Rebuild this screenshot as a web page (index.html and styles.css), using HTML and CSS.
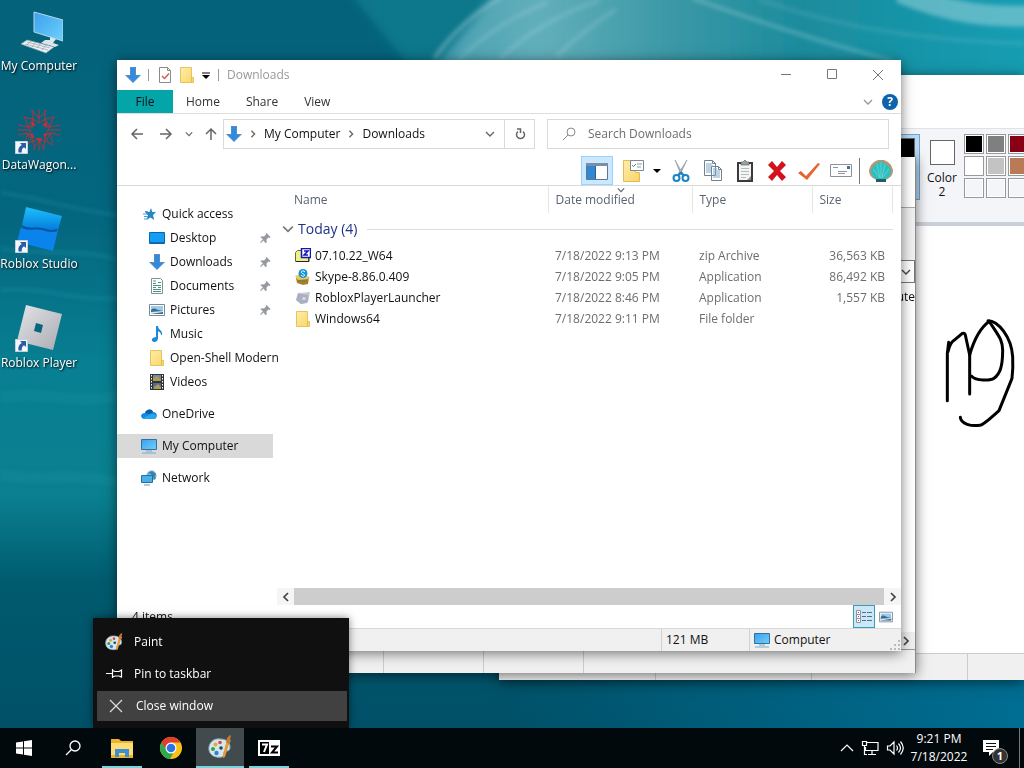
FILE: index.html
```html
<!DOCTYPE html>
<html lang="en">
<head>
    <meta charset="UTF-8">
    <meta name="viewport" content="width=device-width, initial-scale=1.0">
    <title>Downloads</title>
    <link rel="stylesheet" href="styles.css">
</head>
<body>

<!-- Shared icons -->
<svg class="sprites" aria-hidden="true">
    <defs>
        <linearGradient id="g-screen" x1="0" y1="0" x2="1" y2="1">
            <stop offset="0" stop-color="#3aa0ee"/><stop offset="1" stop-color="#6fd0fb"/>
        </linearGradient>
        <linearGradient id="g-folder" x1="0" y1="0" x2="1" y2="1">
            <stop offset="0" stop-color="#ffedaa"/><stop offset="1" stop-color="#f8d568"/>
        </linearGradient>
        <linearGradient id="g-silver" x1="0" y1="0" x2="1" y2="1">
            <stop offset="0" stop-color="#e4e5e8"/><stop offset="1" stop-color="#a9abb2"/>
        </linearGradient>
        <linearGradient id="g-studio" x1="0" y1="0" x2="0" y2="1">
            <stop offset="0" stop-color="#1cc1fb"/><stop offset="1" stop-color="#0479dd"/>
        </linearGradient>
    </defs>
    <symbol id="down" viewBox="0 0 16 16">
        <path d="M5 0h6v8h5l-8 8-8-8h5z" fill="#2f8be0"/>
        <path d="M5.500.5h5v8h4l-6.500 6.500L1.500 8.500h4z" fill="none" stroke="#5a8dbd"/>
    </symbol>
    <symbol id="folder" viewBox="0 0 16 16">
        <path d="M1.500.5h11v10h2v5h-13z" fill="url(#g-folder)" stroke="#e5c45b"/>
        <path d="M12.500 10v5" stroke="#e3bf50"/>
    </symbol>
    <symbol id="monitor" viewBox="0 0 16 16">
        <path d="M.5 1.500h15v10H.5z" fill="url(#g-screen)" stroke="#36719c"/>
        <path d="M5 13h6M1 15h14" stroke="#7da7c7"/>
    </symbol>
    <symbol id="picture" viewBox="0 0 16 16">
        <path d="M.5 2.500h15v11H.5z" fill="#fff" stroke="#7c8894"/>
        <path d="M2 4h12v8H2z" fill="#9ccbec"/>
        <path d="M2 8c3-3 5-1 7 0l5 1v3H2z" fill="#3a6c8d"/>
        <path d="M2 10l12-1v1L2 12z" fill="#d7e9f3"/>
    </symbol>
    <symbol id="pin" viewBox="0 0 16 16">
        <path d="M9.500 3l4 4-1 1-1-.4-2 2 .2 2.600-1 1-2.300-2.600L4 13l-.8-.8 2.700-2.900L3.500 7.300l1-1 2.500.2 2-2-.2-.8z" fill="#949aa0"/>
    </symbol>
    <symbol id="chev-down" viewBox="0 0 10 10">
        <path d="M1 3l4 4 4-4" fill="none" stroke="currentColor" stroke-width="1.400"/>
    </symbol>
    <symbol id="chev-right" viewBox="0 0 10 10">
        <path d="M3 1l4 4-4 4" fill="none" stroke="currentColor" stroke-width="1.700"/>
    </symbol>
    <symbol id="close" viewBox="0 0 12 12">
        <path d="M1 1l10 10M11 1L1 11" fill="none" stroke="currentColor"/>
    </symbol>
    <symbol id="shortcut" viewBox="0 0 13 13">
        <path d="M.5.5h12v12H.5z" fill="#f5f8fb" stroke="#c5d0da"/>
        <path d="M5 2h6v6L9 6.200C7 7.500 6.500 9 6.800 11.500H3.500C2.800 8 4 5.600 6.800 4z" fill="#2a5ba5"/>
    </symbol>
    <symbol id="palette" viewBox="0 0 24 24">
        <path d="M1 15C0 8 6 3 12 4c6 0 10 3 10 8 0 4-2 4-5 4-2 1 0 4-3 6-6 1-12-1-13-7z" fill="#d5e7ee" stroke="#8fabb9"/>
        <circle cx="5" cy="14" r="2" fill="#3f9b43"/>
        <circle cx="7.500" cy="9.500" r="2" fill="#e1a933"/>
        <circle cx="12" cy="7.500" r="1.800" fill="#d24c3d"/>
        <circle cx="8.500" cy="18" r="2.200" fill="#2f84d0"/>
        <circle cx="13" cy="13" r="1.800" fill="#24485b"/>
        <path d="M18 8l3 1-4 13-2 1v-3z" fill="#e39a3b"/>
        <path d="M18 8l1-5 3-3 1 1-1 3 1 2-2 3z" fill="#c87b32"/>
    </symbol>
</svg>

<main class="desktop">
    <svg class="wallpaper" viewBox="0 0 1024 768" preserveAspectRatio="none" aria-hidden="true">
        <defs>
            <linearGradient id="sea" x1="0" y1="0" x2="0" y2="1">
                <stop offset="0" stop-color="#04627a"/>
                <stop offset=".3" stop-color="#04667f"/>
                <stop offset=".5" stop-color="#087f92"/>
                <stop offset=".68" stop-color="#0a8090"/>
                <stop offset=".8" stop-color="#005b6f"/>
                <stop offset="1" stop-color="#005068"/>
            </linearGradient>
            <linearGradient id="wave" x1="0" y1="0" x2="1" y2="0">
                <stop offset="0" stop-color="#3d9aae"/>
                <stop offset=".2" stop-color="#62afbb"/>
                <stop offset=".4" stop-color="#3c98a6"/>
                <stop offset=".6" stop-color="#1b8c9d"/>
                <stop offset="1" stop-color="#14a0b6"/>
            </linearGradient>
            <linearGradient id="deep" x1="0" y1="0" x2="1" y2="0">
                <stop offset=".5" stop-color="#006d92" stop-opacity="0"/>
                <stop offset="1" stop-color="#006d92"/>
            </linearGradient>
            <filter id="soft" x="-20%" y="-20%" width="140%" height="140%"><feGaussianBlur stdDeviation="5"/></filter>
            <filter id="fine" x="-20%" y="-20%" width="140%" height="140%"><feGaussianBlur stdDeviation="2"/></filter>
        </defs>
        <path d="M0 0h1024v768H0z" fill="url(#sea)"/>
        <path d="M340-20h720v130H440z" fill="#0b778b" filter="url(#soft)"/>
        <path d="M505-20h560v130H405z" fill="url(#wave)" filter="url(#soft)"/>
        <g filter="url(#fine)" fill="none" stroke="#b5dde4">
            <path d="M434 62c14-22 34-44 66-64" stroke-width="4" opacity=".4"/>
            <path d="M458 64c24-26 50-44 90-62M500 62c26-26 56-46 100-62M556 60c16-16 30-30 60-50" stroke-width="4" opacity=".25"/>
            <path d="M692-2c60 22 120 44 200 66" stroke-width="3" opacity=".4"/>
            <path d="M760 0c60 20 120 40 264 46" stroke-width="3" opacity=".2"/>
            <path d="M900-8c50 22 90 28 150 24" stroke-width="22" opacity=".45"/>
        </g>
        <g filter="url(#fine)" fill="none" stroke="#2a9fae">
            <path d="M0 203c40 6 80 20 120 24M0 262c50 8 80 0 120 12M0 306c50-4 80 14 120 8" stroke-width="3" opacity=".35"/>
            <path d="M0 420c40-10 80 10 120-4M0 500c40 10 80-4 120 10" stroke-width="12" opacity=".15"/>
        </g>
        <path d="M0 680h1024v88H0z" fill="url(#deep)"/>
    </svg>

    <div class="shortcuts">
        <a href="#" class="shortcut">
            <svg class="big-icon" viewBox="0 0 48 48">
                <path d="M19 4l29 8v21l-29-9z" fill="url(#g-screen)" stroke="#b9d6e6"/>
                <path d="M35 29l6 2-3 4 6 2-4 2-14-4 4-3h5z" fill="#dce5e9"/>
                <path d="M6 36l6-4 27 7-8 6z" fill="#edf1f3" stroke="#94a8b2" stroke-width=".700"/>
                <path d="M10 36l23 6M12 34l23 6M16 33l-4 4M21 34l-4 5M26 35l-4 5M31 37l-4 5" stroke="#92a2ab" stroke-width=".700"/>
            </svg>
            <span>My Computer</span>
        </a>
        <a href="#" class="shortcut">
            <svg class="big-icon" viewBox="0 0 48 48">
                <g fill="none" stroke="#b0333f" stroke-width="1">
                    <path d="M16 3l8 8 8-8M8 10l10 2 0-9M40 10l-10 2 0-9M3 18l10 2-3-10M45 18l-10 2 3-10M3 28l10-2-3 10M45 28l-10-2 3 10M9 38l9-4 2 9M39 38l-9-4-2 9M18 42l6-8 6 8"/>
                    <path d="M13 20l5-8 6 4 6-4 5 8-3 4 3 4-5 7-6-4-6 4-5-7 3-4z"/>
                    <path d="M18 12v8h-5M30 12v8h5M18 35v-8h-5M30 35v-8h5M24 2v14M24 32v12M2 23h13M33 23h13"/>
                </g>
                <path d="M17 14l4 4-5 2zM31 15l2 5-6-2zM15 26l5 4-4 1zM33 26l-3 5-2-4zM21 31h6l-2 5z" fill="#c33039"/>
                <use href="#shortcut" x="0" y="34" width="13" height="13"/>
            </svg>
            <span>DataWagon...</span>
        </a>
        <a href="#" class="shortcut">
            <svg class="big-icon" viewBox="0 0 48 48">
                <path d="M11 1l36 9-4 14c-8 3-12-2-18-2-6 1-12 1-18-3z" fill="url(#g-studio)"/>
                <path d="M6 21c8 4 12-1 19 1 6 2 13 4 18 2l-5 21-36-9z" fill="#0a83ec"/>
                <path d="M7 21c10 4 14 0 20 2s10 3 15 1" fill="none" stroke="#07579e" stroke-width="2"/>
                <use href="#shortcut" x="0" y="34" width="13" height="13"/>
            </svg>
            <span>Roblox Studio</span>
        </a>
        <a href="#" class="shortcut">
            <svg class="big-icon" viewBox="0 0 48 48">
                <path d="M11 0l36 9-9 36-36-9z" fill="url(#g-silver)"/>
                <path d="M21 18l7 2-2 8-7-2z" fill="#08667c"/>
                <use href="#shortcut" x="0" y="34" width="13" height="13"/>
            </svg>
            <span>Roblox Player</span>
        </a>
    </div>

    <!-- Paint, at the back -->
    <section class="window paint" aria-label="Paint">
        <div class="paint-title"></div>
        <div class="paint-ribbon">
            <button class="color-pick active" aria-label="Color 1"><i class="well black"></i></button>
            <button class="color-pick"><i class="well"></i><span>Color</span><span>2</span></button>
            <div class="swatches">
                <i class="swatch black"></i><i class="swatch gray"></i><i class="swatch dark-red"></i>
                <i class="swatch white"></i><i class="swatch light-gray"></i><i class="swatch brown"></i>
                <i class="swatch"></i><i class="swatch"></i><i class="swatch"></i>
            </div>
        </div>
        <div class="canvas">
            <svg class="doodle" viewBox="180 51 219 339" aria-hidden="true">
                <path d="M190 302V160l4-33M192 155c4-18 9-28 18-34l25-21q7-2 9 5l13 60v117"/>
                <path d="M257 165c9-32 26-78 60-102M312 62c30 0 70 48 74 108 1 20 1 40-2 65l-39 97c-24 22-44 40-54 43-30 6-60-4-62-23"/>
                <path d="M317 66c28 44 38 52 39 84 0 50-8 72-26 85-10 7-54 9-68-7"/>
            </svg>
        </div>
        <div class="paint-status"><span></span><span></span><span></span><span></span></div>
    </section>

    <!-- Second explorer window, mostly covered -->
    <section class="window behind" aria-label="Explorer">
        <div class="behind-head"></div>
        <div class="behind-bar"></div>
        <div class="behind-field"><svg class="s10"><use href="#chev-down"/></svg></div>
        <div class="behind-body">ute</div>
        <div class="behind-scroll"><svg class="s10"><use href="#chev-right"/></svg></div>
        <div class="behind-status"><span></span><span></span><span></span></div>
    </section>

    <section class="window explorer" aria-label="Downloads">
        <div class="titlebar">
            <svg class="s16"><use href="#down"/></svg>
            <i class="divider"></i>
            <svg class="s16" viewBox="0 0 16 16">
                <path d="M2.500.5h8l3 3v12h-11z" fill="#fff" stroke="#8b8b8b"/>
                <path d="M10.500.5v3h3" fill="none" stroke="#8b8b8b"/>
                <path d="M5 9l2.500 2.500 4.500-5" fill="none" stroke="#cf6258" stroke-width="1.500"/>
            </svg>
            <svg class="s16"><use href="#folder"/></svg>
            <svg class="s10" viewBox="0 0 10 10"><path d="M1 3h8" stroke="#000"/><path d="M1 5h8L5 9z"/></svg>
            <i class="divider"></i>
            <h1>Downloads</h1>
            <div class="controls">
                <button aria-label="Minimize"><svg class="s12" viewBox="0 0 12 12"><path d="M1 5.500h10" stroke="currentColor"/></svg></button>
                <button aria-label="Maximize"><svg class="s12" viewBox="0 0 12 12"><path d="M1.500.5h9v9h-9z" fill="none" stroke="currentColor"/></svg></button>
                <button aria-label="Close"><svg class="s12"><use href="#close"/></svg></button>
            </div>
        </div>

        <nav class="tabs">
            <a href="#" class="file">File</a>
            <a href="#">Home</a>
            <a href="#">Share</a>
            <a href="#">View</a>
            <button class="expand" aria-label="Expand ribbon"><svg class="s10"><use href="#chev-down"/></svg></button>
            <button class="help" aria-label="Help">?</button>
        </nav>

        <div class="address-row">
            <button aria-label="Back"><svg class="s14" viewBox="0 0 14 14"><path d="M13 7H2M7 2L2 7l5 5"/></svg></button>
            <button aria-label="Forward"><svg class="s14" viewBox="0 0 14 14"><path d="M1 7h11M7 2l5 5-5 5"/></svg></button>
            <button class="narrow" aria-label="Recent"><svg class="s8"><use href="#chev-down"/></svg></button>
            <button class="up" aria-label="Up"><svg class="s14" viewBox="0 0 14 14"><path d="M7 13V2M2 7l5-5 5 5"/></svg></button>
            <div class="address">
                <svg class="s16"><use href="#down"/></svg>
                <svg class="s8"><use href="#chev-right"/></svg>
                <a href="#">My Computer</a>
                <svg class="s8"><use href="#chev-right"/></svg>
                <a href="#">Downloads</a>
                <button class="history" aria-label="Previous locations"><svg class="s10"><use href="#chev-down"/></svg></button>
                <button class="refresh" aria-label="Refresh"><svg class="s12" viewBox="0 0 12 12"><path d="M9 3.500a4 4 0 1 1-5 0M3 1h3.500v4"/></svg></button>
            </div>
            <label class="search">
                <svg class="s14" viewBox="0 0 14 14"><circle cx="9" cy="5" r="4"/><path d="M6 8l-5 5"/></svg>
                <input type="search" placeholder="Search Downloads" aria-label="Search Downloads">
            </label>
        </div>

        <div class="toolbar">
            <button class="active" aria-label="Navigation pane">
                <svg class="s24" viewBox="0 0 24 24">
                    <path d="M1.500 4.500h21v16h-21z" fill="#fff" stroke="#5d7890"/>
                    <path d="M1 4h22v3H1z" fill="#7890a4"/><path d="M2 7h8v13H2z" fill="#2f88d5"/><path d="M10.500 7v13" stroke="#345d80"/>
                </svg>
            </button>
            <button aria-label="Folder options">
                <svg class="s24" viewBox="0 0 24 24">
                    <path d="M2.500 1.500h12v12h4v9h-16z" fill="url(#g-folder)" stroke="#e0bd52"/>
                    <path d="M9.500 1.500h13v10h-13z" fill="#fff" stroke="#7b8793"/>
                    <path d="M11 6l1.500 1.500L15 5" fill="none" stroke="#377db5"/><path d="M16 5h5M16 8h4" stroke="#8b98a5"/>
                </svg>
            </button>
            <button class="drop" aria-label="More options"><svg class="s8" viewBox="0 0 8 8"><path d="M0 2h8L4 6z"/></svg></button>
            <button aria-label="Cut">
                <svg class="s24" viewBox="0 0 24 24">
                    <path d="M6 1l8 14-2 1zM18 1L9 15l2 1z" fill="#a9b4bc" stroke="#8795a0" stroke-width=".600"/>
                    <circle cx="7.500" cy="19" r="3" fill="none" stroke="#1784c7" stroke-width="2"/>
                    <circle cx="16.500" cy="19" r="3" fill="none" stroke="#1784c7" stroke-width="2"/>
                    <path d="M9 16.500l3-3 3 3" fill="none" stroke="#1784c7" stroke-width="2"/>
                </svg>
            </button>
            <button aria-label="Copy">
                <svg class="s24" viewBox="0 0 24 24">
                    <path d="M3.500 1.500h8l3 3v12h-11zM10.500 7.500h7l3 3v11h-10z" fill="#fff" stroke="#6e8294"/>
                    <path d="M5 5h6M5 7h7M5 9h5M5 11h5M5 13h5M12 12h7M12 14h7M12 16h7M12 18h7M12 10h4" stroke="#7fa6ca"/>
                    <path d="M11.500 1.500v3h3M17.500 7.500v3h3" fill="none" stroke="#6e8294"/>
                </svg>
            </button>
            <button aria-label="Paste">
                <svg class="s24" viewBox="0 0 24 24">
                    <path d="M4 3h16v20H4z" fill="#3e3a38"/><path d="M6 5h12v16H6z" fill="#f5f5f3"/>
                    <path d="M8 6V3h2l2-2 2 2h2v3z" fill="#98a1a4" stroke="#555" stroke-width=".600"/>
                    <path d="M8 9.500h8M8 12.500h8M8 15.500h8M8 18.500h5" stroke="#b4bcc0"/>
                    <path d="M14 21l4-4v4z" fill="#8c9498"/>
                </svg>
            </button>
            <button aria-label="Delete">
                <svg class="s24" viewBox="0 0 24 24"><path d="M3 6l4-4 5 6 5-6 4 4-6 6 6 6-4 4-5-6-5 6-4-4 6-6z" fill="#d4121e"/></svg>
            </button>
            <button aria-label="Properties">
                <svg class="s24" viewBox="0 0 24 24"><path d="M1 14l3-2 5 5L21 4l2 1L10 21z" fill="#e8622c"/></svg>
            </button>
            <button aria-label="E-mail">
                <svg class="s24" viewBox="0 0 24 24">
                    <path d="M1.500 5.500h21v12h-21z" fill="#fff" stroke="#87929b"/>
                    <path d="M18 7h3v3h-3z" fill="#4c6d93"/><path d="M4 8.500h5M9 12.500h9M9 14.500h7" stroke="#8897a3"/>
                </svg>
            </button>
            <i class="divider"></i>
            <button aria-label="Open-Shell settings">
                <svg class="s24" viewBox="0 0 24 24">
                    <path d="M6 20C1 18 0 14 0 11l2-5 3-3 4-2h6l4 2 3 3 2 5c0 3-1 7-6 9l-2 2H8z" fill="#b9946e"/>
                    <path d="M7 20C3 18 2 14 2 11l3-5 7-4 7 4 3 5c0 3-1 7-5 9z" fill="#2cc0c2"/>
                    <path d="M11 19L4 10M11 19L8 5M12 19V3M13 19l3-14M13 19l7-9" stroke="#62d0cd" fill="none"/>
                    <path d="M7 20h10v3H7z" fill="#245c60"/>
                </svg>
            </button>
        </div>

        <div class="content">
            <nav class="tree">
                <a href="#" class="root">
                    <svg class="s16" viewBox="0 0 16 16"><path d="M10 2l1.300 4H15l-3 3 1.200 5L9.500 11.500 5.500 14 7 9.500 4 6h4.500z" fill="#2586c8"/><path d="M2 8h5M3 10.500h4M3 13h3M4 5.500h3" stroke="#4ba0d8"/></svg>
                    Quick access
                </a>
                <a href="#"><svg class="s16" viewBox="0 0 16 16"><path d="M.5 2.500h15v11H.5z" fill="#159cf3" stroke="#0866ac"/><path d="M1 12.500h14" stroke="#0a6cb5"/></svg>Desktop<svg class="s16 pin"><use href="#pin"/></svg></a>
                <a href="#"><svg class="s16"><use href="#down"/></svg>Downloads<svg class="s16 pin"><use href="#pin"/></svg></a>
                <a href="#">
                    <svg class="s16" viewBox="0 0 16 16"><path d="M2.500.5h9l2 2v13h-11z" fill="#fff" stroke="#7e929c"/><path d="M4 3h3M4 5.500h3M9 4.500h3M4 7.500h8M4 9.500h3M9 9.500h3M4 11.500h8M4 13.500h8" stroke="#4b937e"/></svg>
                    Documents<svg class="s16 pin"><use href="#pin"/></svg>
                </a>
                <a href="#"><svg class="s16"><use href="#picture"/></svg>Pictures<svg class="s16 pin"><use href="#pin"/></svg></a>
                <a href="#"><svg class="s16" viewBox="0 0 16 16"><path d="M7 0h2c0 4 5 4 4 9h-1c0-3-2-3-3-4v7c0 2-1 4-4 4-4-1-2-5 2-5z" fill="#188bd4"/></svg>Music</a>
                <a href="#"><svg class="s16"><use href="#folder"/></svg>Open-Shell Modern</a>
                <a href="#">
                    <svg class="s16" viewBox="0 0 16 16"><path d="M1 0h14v16H1z" fill="#333"/><path d="M4 1h8v6H4z" fill="#7189a9"/><path d="M4 9h8v6H4z" fill="#4c6a9b"/><path d="M4 4l4-2 4 4v1H4zM5 13l4-3 3 3v2H5z" fill="#ac9a55"/><path d="M2.500 1v14M13.500 1v14" stroke="#fff" stroke-dasharray="1.500 1.500"/></svg>
                    Videos
                </a>
                <a href="#" class="root apart"><svg class="s16" viewBox="0 0 16 16"><path d="M3 13c-4-1-4-6 1-6C5 3 11 2 12 6c5 0 5 6 1 7z" fill="#1587dc"/><path d="M4 7c1-4 7-5 8-1l-3 2-5-1z" fill="#0a5cab"/><path d="M2 12l8-4c4 0 6 1 5 3 0 2-1 2-3 2H4z" fill="#28a8ea"/></svg>OneDrive</a>
                <a href="#" class="root apart selected"><svg class="s16"><use href="#monitor"/></svg>My Computer</a>
                <a href="#" class="root apart">
                    <svg class="s16" viewBox="0 0 16 16"><circle cx="10.500" cy="5.500" r="5" fill="#7ab5d6"/><path d="M7 3l4-2 4 3-2 4-3-4zM12 8l3-1-1 3z" fill="#3d80aa"/><path d="M.5 5.500h11v7H.5z" fill="#48b0ec" stroke="#2a6f9b"/><path d="M3 15h6" stroke="#6495b1"/></svg>
                    Network
                </a>
            </nav>

            <div class="listing">
                <table class="files">
                    <colgroup><col><col class="c-date"><col class="c-type"><col class="c-size"><col class="c-end"></colgroup>
                    <thead>
                        <tr><th>Name</th><th>Date modified<svg class="s8 sort"><use href="#chev-down"/></svg></th><th>Type</th><th>Size</th><td></td></tr>
                    </thead>
                    <tbody>
                        <tr class="group"><th colspan="5"><button><svg class="s12"><use href="#chev-down"/></svg>Today (4)<i></i></button></th></tr>
                        <tr>
                            <td><span><svg class="s16" viewBox="0 0 16 16"><path d="M.5 4.500l2-2h4v3h7v8H.5z" fill="#eef08c" stroke="#6d6d32"/><path d="M1 13.500h13v-4" fill="none" stroke="#222"/><path d="M6.500.5h9v9h-9z" fill="#fff" stroke="#1414b4" stroke-width="1.500"/><path d="M9 3h4L9 7h4" fill="none" stroke="#1414b4" stroke-width="1.500"/></svg>07.10.22_W64</span></td>
                            <td>7/18/2022 9:13 PM</td><td>zip Archive</td><td>36,563 KB</td><td></td>
                        </tr>
                        <tr>
                            <td><span><svg class="s16" viewBox="0 0 16 16"><path d="M1 9h13l-1 6-5 1-6-2z" fill="#a6802e"/><path d="M0 7l6-2 9 3-2 2-10 1z" fill="#efc65c"/><circle cx="8" cy="4.500" r="4.500" fill="#1596d5"/><path d="M10 3C8 1 6 2 6.500 3.500S10 5 9.500 6.500 6.500 7 6 6" fill="none" stroke="#fff"/><path d="M3 12h9" stroke="#64813d"/></svg>Skype-8.86.0.409</span></td>
                            <td>7/18/2022 9:05 PM</td><td>Application</td><td>86,492 KB</td><td></td>
                        </tr>
                        <tr>
                            <td><span><svg class="s16" viewBox="0 0 16 16"><path d="M3 3l12-1-2 10-7 2-5-4z" fill="url(#g-silver)"/><path d="M3 3l10 2-1 8-6 1-5-4z" fill="#a9b0c1"/><path d="M8 7l3 .5-1 2.500-3-.5z" fill="#d9dde6"/></svg>RobloxPlayerLauncher</span></td>
                            <td>7/18/2022 8:46 PM</td><td>Application</td><td>1,557 KB</td><td></td>
                        </tr>
                        <tr>
                            <td><span><svg class="s16"><use href="#folder"/></svg>Windows64</span></td>
                            <td>7/18/2022 9:11 PM</td><td>File folder</td><td></td><td></td>
                        </tr>
                    </tbody>
                </table>
                <div class="scrollbar">
                    <button aria-label="Scroll left"><svg class="s10" viewBox="0 0 10 10"><path d="M7 1L3 5l4 4" fill="none" stroke="currentColor" stroke-width="1.700"/></svg></button>
                    <i class="thumb"></i>
                    <button aria-label="Scroll right"><svg class="s10"><use href="#chev-right"/></svg></button>
                </div>
            </div>
        </div>

        <div class="items-row">
            <span>4 items</span>
            <button class="active" aria-label="Details view">
                <svg class="s18" viewBox="0 0 18 18">
                    <path d="M1.500 2.500h4v4h-4zM1.500 6.500h4v4h-4zM1.500 10.500h4v4h-4z" fill="#fff" stroke="#8d92a6"/>
                    <path d="M3 4.500h1M3 8.500h1M3 12.500h1" stroke="#c04a5d"/>
                    <path d="M7 4.500h4M7 8.500h4M7 12.500h4M12 4.500h5M12 8.500h5M12 12.500h5" stroke="#53708d"/>
                </svg>
            </button>
            <button aria-label="Large icons"><svg class="s14"><use href="#picture"/></svg></button>
        </div>

        <footer class="statusbar">
            <span class="grow"></span>
            <span class="size">121 MB</span>
            <span class="zone"><svg class="s16"><use href="#monitor"/></svg>Computer
                <svg class="s12 grip" viewBox="0 0 12 12"><path d="M9 1h2v2H9zM5 5h2v2H5zM9 5h2v2H9zM1 9h2v2H1zM5 9h2v2H5zM9 9h2v2H9z" fill="#bbb"/></svg>
            </span>
        </footer>
    </section>

    <div class="jumplist">
        <button><svg class="s18"><use href="#palette"/></svg>Paint</button>
        <button><svg class="s18" viewBox="0 0 18 18"><path d="M1 8.500h6M7.500 4v9M7.500 5.500L10 6.500h4l2.500-1.500v7L14 11h-4l-2.500 1" fill="none" stroke="#fff" stroke-width="1.200"/></svg>Pin to taskbar</button>
        <button class="active"><svg class="s18" viewBox="0 0 18 18"><path d="M3 3l12 12M15 3L3 15" stroke="#ddd" stroke-width="1.200"/></svg>Close window</button>
    </div>
</main>

<footer class="taskbar">
    <button aria-label="Start"><svg class="s18" viewBox="0 0 18 18"><path d="M1 3.500l7-1v6H1zM9 2.300L17 1v7.500H9zM1 9.500h7v6l-7-1zM9 9.500h8V17l-8-1.300z" fill="#fff"/></svg></button>
    <button aria-label="Search"><svg class="s18" viewBox="0 0 18 18"><circle cx="11" cy="7" r="5" fill="none" stroke="#fff" stroke-width="1.300"/><path d="M7.500 10.500L2 16" stroke="#fff" stroke-width="1.300"/></svg></button>
    <button class="open" aria-label="File Explorer">
        <svg class="s24" viewBox="0 0 24 24"><path d="M1 3h8l2 2h12v17H1z" fill="#e9b52f"/><path d="M1 7h22v12H1z" fill="#ffdd73"/><path d="M5 13h14v8h-4v-4H9v4H5z" fill="#3b8fd6"/></svg>
    </button>
    <button aria-label="Chrome">
        <svg class="s24" viewBox="0 0 24 24">
            <circle cx="12" cy="12" r="11" fill="#fbc116"/>
            <path d="M2.500 6.500A11 11 0 0 1 21.500 6.500H12L7 14.500z" fill="#e33b2e"/>
            <path d="M2.500 6.500A11 11 0 0 0 11 23l5-9H7.500z" fill="#2da94f"/>
            <circle cx="12" cy="12" r="5.500" fill="#fff"/><circle cx="12" cy="12" r="4.300" fill="#2a74e8"/>
        </svg>
    </button>
    <button class="current" aria-label="Paint"><svg class="s24"><use href="#palette"/></svg></button>
    <button class="open" aria-label="7-Zip">
        <svg class="s24" viewBox="0 0 24 24">
            <path d="M1 4h22v16H1z" fill="#fff"/><path d="M3 6h9v12H3z" fill="#000"/>
            <path d="M5 8.500h5L7 16" fill="none" stroke="#fff" stroke-width="2"/>
            <path d="M14 10.500h6l-5 6h6" fill="none" stroke="#000" stroke-width="2"/>
        </svg>
    </button>
    <div class="tray">
        <svg class="s14" viewBox="0 0 14 14"><path d="M1 10l6-6 6 6"/></svg>
        <svg class="s18" viewBox="0 0 18 18"><path d="M6 3.500h11v8H4.500V8M7 15.500h8M11 12v3.500M1.500 2.500h4v4h-4zM3.500 7v8.500H6"/></svg>
        <svg class="s18" viewBox="0 0 18 18"><path d="M1.500 7v4h2.500l4 4V3L4 7zM10.500 6.500q2 2.500 0 5M12.500 4.500q4 4.500 0 9M14.500 2.500q5.500 6.500 0 13"/></svg>
    </div>
    <div class="clock"><time>9:21 PM</time><time>7/18/2022</time></div>
    <button class="notices" aria-label="Notifications">
        <svg class="s18" viewBox="0 0 18 18"><path d="M1 1h16v12h-6l-4 4v-4H1z" fill="#fff"/><path d="M4 4.500h10M4 7.500h10M4 10.500h7" stroke="#111"/></svg>
        <b>1</b>
    </button>
</footer>

</body>
</html>
```
FILE: styles.css
```css
* {
    box-sizing: border-box;
}
body {
    margin: 0;
    height: 100vh;
    overflow: hidden;
    display: flex;
    flex-direction: column;
    font-family: "Open Sans", "Noto Sans", sans-serif;
    font-size: 12px;
    line-height: 16px;
    color: #111;
}
button {
    display: flex;
    align-items: center;
    justify-content: center;
    padding: 0;
    border: none;
    background: none;
    font: inherit;
    color: inherit;
}
a {
    color: inherit;
    text-decoration: none;
}
svg {
    display: block;
    flex: none;
}
.sprites {
    position: absolute;
    width: 0;
    height: 0;
}
.s8 { width: 8px; height: 8px; }
.s10 { width: 10px; height: 10px; }
.s12 { width: 12px; height: 12px; }
.s14 { width: 14px; height: 14px; }
.s16 { width: 16px; height: 16px; }
.s18 { width: 18px; height: 18px; }
.s24 { width: 24px; height: 24px; }

/* Desktop */
.desktop {
    position: relative;
    flex: 1;
    overflow: hidden;
}
.wallpaper {
    position: absolute;
    inset: 0;
    width: 100%;
    height: 100%;
}
.shortcuts {
    position: relative;
    width: 78px;
    padding-top: 8px;
}
.shortcut {
    display: flex;
    flex-direction: column;
    align-items: center;
    gap: 2px;
    height: 99px;
    color: #fff;
    white-space: nowrap;
    text-shadow: 1px 1px 2px #000;
}
.big-icon {
    width: 48px;
    height: 48px;
}

/* Windows */
.window {
    position: absolute;
    display: flex;
    flex-direction: column;
    background: #fff;
    box-shadow: 0 2px 12px rgba(0, 0, 0, 0.55);
}
.explorer {
    inset: 60px 123px 77px 117px;
}
.behind {
    inset: 157px 108px 55px 132px;
    border-right: 1px solid #8a8a8a;
}
.paint {
    inset: 75px 0 48px 499px;
}

/* Paint window */
.paint-title {
    height: 53px;
}
.paint-ribbon {
    display: flex;
    justify-content: flex-end;
    height: 98px;
    padding-top: 5px;
    background: #f3f5f9;
    border-top: 1px solid #dfe3e8;
    border-bottom: 4px solid #c9d0d8;
}
.color-pick {
    flex-direction: column;
    justify-content: flex-start;
    width: 44px;
    height: 66px;
    padding-top: 6px;
    line-height: 14px;
}
.color-pick.active {
    background: #b9d9f4;
    border: 1px solid #6fa5d3;
    padding-top: 3px;
}
.well {
    width: 25px;
    height: 25px;
    margin-bottom: 6px;
    border: 1px solid #666;
    background: #fff;
}
.active .well {
    width: 34px;
    height: 34px;
}
.swatches {
    display: grid;
    grid-template-columns: repeat(3, 20px);
    grid-auto-rows: 20px;
    gap: 2px;
    width: 60px;
    overflow: hidden;
}
.swatch {
    border: 1px solid #999;
    background: #f3f5f9;
    box-shadow: inset 0 0 0 1px #fff;
}
.black { background: #000; }
.gray { background: #7f7f7f; }
.dark-red { background: #880015; }
.white { background: #fff; }
.light-gray { background: #c3c3c3; }
.brown { background: #b97a57; }
.canvas {
    flex: 1;
    display: flex;
    justify-content: flex-end;
    padding: 91px 7px 0 0;
}
.doodle {
    width: 73px;
    height: 113px;
    fill: none;
    stroke: #000;
    stroke-width: 9;
    stroke-linecap: round;
    stroke-linejoin: round;
}
.paint-status {
    display: grid;
    grid-template-columns: 156px 156px 156px 1fr;
    height: 27px;
    background: #f0f0f0;
    border-top: 1px solid #ccc;
}
.paint-status span + span {
    border-left: 1px solid #ccc;
}

/* Covered explorer window */
.behind-head {
    height: 51px;
    border-bottom: 1px solid #aaa;
}
.behind-bar {
    height: 52px;
    background: #f0f0f0;
}
.behind-field {
    display: flex;
    align-items: center;
    justify-content: flex-end;
    height: 23px;
    padding-right: 3px;
    border: 1px solid #777;
    color: #444;
}
.behind-body {
    flex: 1;
    padding-top: 6px;
    text-align: right;
}
.behind-scroll {
    display: flex;
    align-items: center;
    justify-content: flex-end;
    height: 18px;
    padding-right: 4px;
    background: #f0f0f0;
    border-bottom: 1px solid #999;
    color: #444;
}
.behind-status {
    display: grid;
    grid-template-columns: 252px 100px 100px;
    height: 23px;
    background: #f0f0f0;
}
.behind-status span {
    border-right: 1px solid #ccc;
}

/* Title bar */
.titlebar {
    display: flex;
    align-items: center;
    gap: 6px;
    height: 30px;
    padding-left: 8px;
    color: #999;
}
.titlebar h1 {
    margin: 0;
    font-size: 12px;
    font-weight: normal;
}
.divider {
    width: 1px;
    height: 12px;
    margin: 0 2px 0 1px;
    background: #999;
}
.controls {
    display: flex;
    margin-left: auto;
    color: #777;
}
.controls button {
    width: 46px;
    height: 30px;
}

/* Ribbon tabs */
.tabs {
    display: flex;
    align-items: stretch;
    height: 24px;
    border-bottom: 1px solid #ddd;
    line-height: 24px;
    color: #333;
}
.tabs a {
    padding: 0 13px;
}
.tabs .file {
    width: 56px;
    padding: 0;
    background: #03a5a9;
    text-align: center;
    color: #111;
}
.tabs .expand {
    margin-left: auto;
    width: 28px;
    color: #999;
}
.tabs .help {
    align-self: center;
    width: 16px;
    height: 16px;
    margin-right: 3px;
    border-radius: 8px;
    background: #0d62ab;
    color: #fff;
    font-weight: bold;
}

/* Address row */
.address-row {
    display: flex;
    align-items: center;
    height: 40px;
    padding: 0 12px 0 5px;
    color: #666;
}
.address-row svg:not(:has(use)) {
    fill: none;
    stroke: currentColor;
    stroke-width: 1.5;
}
.address-row > button {
    width: 29px;
    height: 30px;
}
.address-row > .narrow {
    width: 18px;
}
.address-row > .up {
    width: 25px;
}
.address {
    flex: 1 1 312px;
    display: flex;
    align-items: center;
    gap: 7px;
    height: 30px;
    padding-left: 2px;
    border: 1px solid #d9d9d9;
}
.address a {
    color: #111;
}
.address .history {
    margin-left: auto;
    width: 14px;
}
.address .refresh {
    width: 30px;
    height: 28px;
    border-left: 1px solid #d9d9d9;
}
.search {
    flex: 1 1 342px;
    display: flex;
    align-items: center;
    gap: 12px;
    height: 30px;
    margin-left: 12px;
    padding-left: 14px;
    border: 1px solid #d9d9d9;
}
.search .s14 {
    color: #888;
    stroke-width: 1;
}
.search input {
    flex: 1;
    min-width: 0;
    padding: 0;
    border: none;
    outline: none;
    font: inherit;
}
.search input::placeholder {
    color: #6d6d6d;
}

/* Toolbar */
.toolbar {
    display: flex;
    align-items: flex-end;
    justify-content: flex-end;
    height: 32px;
    padding-right: 4px;
    border-bottom: 1px solid #d9d9d9;
}
.toolbar button {
    width: 32px;
    height: 29px;
}
.toolbar .active {
    margin-right: 4px;
    background: #cce8ff;
    border: 1px solid #99d1ff;
}
.toolbar .drop {
    width: 16px;
}
.toolbar .divider {
    height: 26px;
    margin: 0 5px 1px 2px;
    background: #777;
}

/* Folder tree */
.content {
    flex: 1;
    display: flex;
    min-height: 0;
}
.tree {
    width: 156px;
    padding-top: 16px;
}
.tree a {
    display: flex;
    align-items: center;
    gap: 5px;
    height: 24px;
    padding-left: 32px;
    white-space: nowrap;
}
.tree .root {
    padding-left: 24px;
}
.tree .apart {
    margin-top: 8px;
}
.tree .selected {
    background: #d9d9d9;
}
.tree .pin {
    margin-left: auto;
}

/* File list */
.listing {
    flex: 1;
    display: flex;
    flex-direction: column;
    margin-left: 4px;
}
.files {
    width: 100%;
    table-layout: fixed;
    border-collapse: collapse;
    color: #6d6d6d;
}
.c-date { width: 144px; }
.c-type { width: 120px; }
.c-size { width: 80px; }
.c-end { width: 9px; }
.files th, .files td {
    height: 21px;
    padding: 0 7px;
    font-weight: normal;
    text-align: left;
}
.files td:nth-child(4) {
    text-align: right;
}
.files thead th {
    position: relative;
    height: 27px;
    border-right: 1px solid #e5e5e5;
    color: #5a6470;
}
.files thead th:first-child {
    padding-left: 17px;
}
.sort {
    position: absolute;
    top: 0;
    left: 68px;
}
.files .group th {
    height: 32px;
    padding: 0 8px 0 5px;
}
.group button {
    width: 100%;
    gap: 4px;
    font-size: 14px;
    color: #1e3287;
}
.group svg {
    color: #777;
}
.group i {
    flex: 1;
    height: 1px;
    margin-left: 6px;
    background: #ddd;
}
.files td:first-child {
    padding: 0 0 0 18px;
    color: #111;
}
.files span {
    display: flex;
    align-items: center;
    gap: 4px;
}
.scrollbar {
    display: flex;
    height: 17px;
    margin-top: auto;
    background: #f5f5f5;
    color: #444;
}
.scrollbar button {
    width: 17px;
}
.scrollbar .thumb {
    flex: 1;
    background: #cdcdcd;
}

/* Status rows */
.items-row {
    display: flex;
    align-items: center;
    height: 23px;
    padding: 0 4px 0 15px;
}
.items-row span {
    flex: 1;
}
.items-row button {
    width: 22px;
    height: 23px;
}
.items-row .active {
    background: #cce8f6;
    border: 1px solid #3b9cb8;
}
.statusbar {
    display: flex;
    height: 23px;
    background: #f0f0f0;
    border-top: 1px solid #d9d9d9;
    line-height: 22px;
}
.statusbar .grow {
    flex: 1;
}
.statusbar .size {
    width: 88px;
    padding-left: 4px;
    border-left: 1px solid #d0d0d0;
}
.statusbar .zone {
    display: flex;
    align-items: center;
    gap: 4px;
    width: 152px;
    padding-left: 4px;
    border-left: 1px solid #d0d0d0;
}
.statusbar .grip {
    align-self: flex-end;
    margin-left: auto;
}

/* Jump list over the taskbar */
.jumplist {
    position: absolute;
    left: 93px;
    bottom: 0;
    width: 256px;
    padding: 8px 2px 6px 4px;
    background: #101010;
    box-shadow: 0 0 8px rgba(0, 0, 0, 0.5);
    color: #fff;
}
.jumplist button {
    justify-content: flex-start;
    gap: 11px;
    width: 100%;
    height: 32px;
    padding-left: 8px;
}
.jumplist .active {
    height: 30px;
    margin: 1px 0;
    padding-left: 10px;
    background: #414141;
}

/* Taskbar */
.taskbar {
    display: flex;
    align-items: center;
    height: 40px;
    padding-right: 4px;
    background: #02090c;
    color: #fff;
}
.taskbar button {
    position: relative;
    width: 48px;
    height: 40px;
    margin-right: 1px;
}
.taskbar .current {
    background: #414b4d;
    border-bottom: 2px solid #76d6e0;
}
.taskbar .open::after {
    content: "";
    position: absolute;
    left: 4px;
    right: 4px;
    bottom: 0;
    height: 2px;
    background: #76d6e0;
}
.tray {
    display: flex;
    align-items: center;
    gap: 7px;
    margin-left: auto;
}
.tray svg {
    fill: none;
    stroke: #fff;
    stroke-width: 1.2;
}
.clock {
    display: flex;
    flex-direction: column;
    align-items: center;
    width: 70px;
    line-height: 18px;
}
.taskbar .notices {
    width: 46px;
    padding-right: 11px;
    margin: 0;
    border-right: 1px solid #777;
}
.notices b {
    position: absolute;
    left: 18px;
    bottom: 4px;
    width: 16px;
    height: 16px;
    border: 1px solid #888;
    border-radius: 8px;
    background: #333;
    font-size: 11px;
    line-height: 14px;
}
```
